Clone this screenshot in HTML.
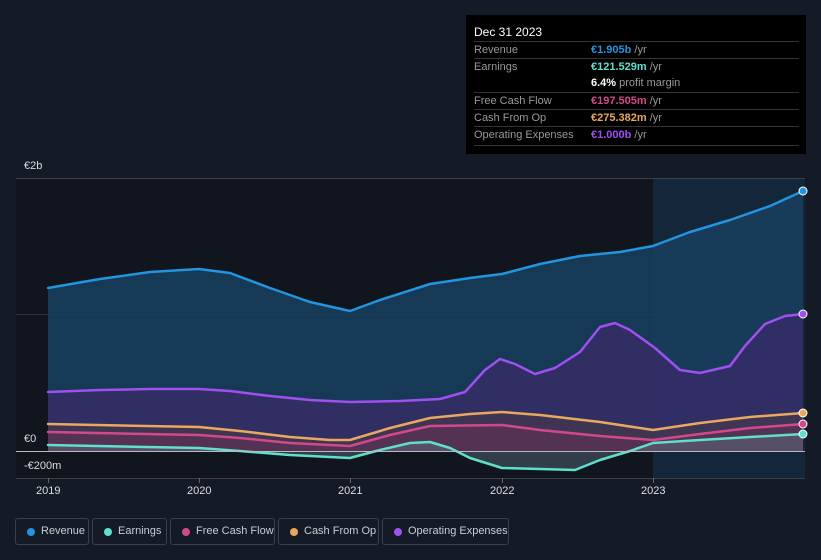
<!DOCTYPE html>
<html><head><meta charset="utf-8"><style>
body{margin:0;width:821px;height:560px;background:#151b26;font-family:"Liberation Sans",sans-serif;overflow:hidden;position:relative}
.tt{position:absolute;left:466px;top:15px;width:340px;height:139px;background:#000;color:#fff;font-size:11px}
.tt .h{position:absolute;left:8px;top:10px;font-size:12px}
.row{position:absolute;left:8px;width:325px;border-top:1px solid #333;height:17px;line-height:17px}
.row .l{position:absolute;left:0;color:#999}
.row .v{position:absolute;left:117px;color:#999}
.leg{position:absolute;top:518px;height:27px;border:1px solid #3a404c;border-radius:3px;color:#c8ccd4;font-size:11px;line-height:25px;box-sizing:border-box;white-space:nowrap}
.leg i{position:absolute;left:11px;top:9px;width:8px;height:8px;border-radius:50%}
.leg span{position:absolute;left:25px}
.ax{position:absolute;color:#ddd;font-size:11px}
</style></head><body>
<svg width="821" height="560" style="position:absolute;left:0;top:0">
<rect x="16" y="178" width="789" height="300" fill="#10151e"/>
<rect x="653" y="178" width="152" height="300" fill="#14263a"/>
<line x1="16" y1="178.5" x2="805" y2="178.5" stroke="#3a404a"/>
<line x1="16" y1="314.5" x2="805" y2="314.5" stroke="#2a3240"/>
<line x1="16" y1="478.5" x2="805" y2="478.5" stroke="#3a404a"/>
<g stroke-linejoin="round" stroke-linecap="round">
<path d="M48,288 L100,279 150,272 199,269 230,273 270,288 310,302 350,311 380,300 430,284 470,278 502,274 540,264 580,256 620,252 653,246 690,232 730,220 770,206 803,191 L803,451 48,451Z" fill="#17405f" opacity=".85"/>
<path d="M48,392 L100,390 150,389 199,389 230,391 270,396 310,400 350,402 400,401 440,399 465,392 485,370 500,359 515,364 535,374 555,368 580,352 600,327 615,323 630,330 655,348 680,370 700,373 730,366 745,346 765,324 785,316 803,314 L803,451 48,451Z" fill="#352d66" opacity=".85"/>
<path d="M48,424 L199,427 240,431 290,437 330,440 350,440 390,428 430,418 470,414 502,412 540,415 600,422 653,430 700,423 750,417 803,413 L803,451 48,451Z" fill="#4a3a4a" opacity=".6"/>
<path d="M48,432 L199,435 240,438 290,443 350,446 390,435 430,426 502,425 540,430 600,436 653,440 700,434 750,428 803,424 L803,451 48,451Z" fill="#6a2f55" opacity=".5"/>
<path d="M48,445 L199,448 240,451 290,455 350,458 380,450 410,443 430,442 450,448 470,458 502,468 540,469 575,470 600,460 630,451 653,443 700,440 750,437 803,434 L803,451 48,451Z" fill="#5a7080" opacity=".45"/>
<g fill="none" stroke-width="2.5">
<polyline stroke="#2394df" points="48,288 100,279 150,272 199,269 230,273 270,288 310,302 350,311 380,300 430,284 470,278 502,274 540,264 580,256 620,252 653,246 690,232 730,220 770,206 803,191"/>
<polyline stroke="#a04ff0" points="48,392 100,390 150,389 199,389 230,391 270,396 310,400 350,402 400,401 440,399 465,392 485,370 500,359 515,364 535,374 555,368 580,352 600,327 615,323 630,330 655,348 680,370 700,373 730,366 745,346 765,324 785,316 803,314"/>
<polyline stroke="#e8a860" points="48,424 199,427 240,431 290,437 330,440 350,440 390,428 430,418 470,414 502,412 540,415 600,422 653,430 700,423 750,417 803,413"/>
<polyline stroke="#d04a8a" points="48,432 199,435 240,438 290,443 350,446 390,435 430,426 502,425 540,430 600,436 653,440 700,434 750,428 803,424"/>
<polyline stroke="#5ee0cc" points="48,445 199,448 240,451 290,455 350,458 380,450 410,443 430,442 450,448 470,458 502,468 540,469 575,470 600,460 630,451 653,443 700,440 750,437 803,434"/>
</g></g>
<line x1="16" y1="451.5" x2="805" y2="451.5" stroke="#bbb" stroke-width="1"/>
<g stroke="#fff" stroke-width="1">
<circle cx="803" cy="191" r="4" fill="#2394df"/><circle cx="803" cy="314" r="4" fill="#a04ff0"/>
<circle cx="803" cy="413" r="4" fill="#e8a860"/><circle cx="803" cy="424" r="4" fill="#d04a8a"/><circle cx="803" cy="434" r="4" fill="#5ee0cc"/>
</g>
<g stroke="#666"><line x1="48.5" y1="478" x2="48.5" y2="483"/><line x1="199.5" y1="478" x2="199.5" y2="483"/><line x1="350.5" y1="478" x2="350.5" y2="483"/><line x1="502.5" y1="478" x2="502.5" y2="483"/><line x1="653.5" y1="478" x2="653.5" y2="483"/></g>
</svg>
<div class="ax" style="left:24px;top:160px">€2b</div>
<div class="ax" style="left:24px;top:433px">€0</div>
<div class="ax" style="left:24px;top:460px">-€200m</div>
<div class="ax" style="left:36px;top:485px">2019</div>
<div class="ax" style="left:187px;top:485px">2020</div>
<div class="ax" style="left:338px;top:485px">2021</div>
<div class="ax" style="left:490px;top:485px">2022</div>
<div class="ax" style="left:641px;top:485px">2023</div>
<div class="tt">
<div class="h">Dec 31 2023</div>
<div class="row" style="top:26px"><span class="l">Revenue</span><span class="v"><b style="color:#2394df">€1.905b</b> /yr</span></div>
<div class="row" style="top:43px"><span class="l">Earnings</span><span class="v"><b style="color:#5ee0cc">€121.529m</b> /yr</span></div>
<div class="row" style="top:60px;border-top:none"><span class="v"><b style="color:#fff">6.4%</b> profit margin</span></div>
<div class="row" style="top:77px"><span class="l">Free Cash Flow</span><span class="v"><b style="color:#d04a8a">€197.505m</b> /yr</span></div>
<div class="row" style="top:94px"><span class="l">Cash From Op</span><span class="v"><b style="color:#e8a860">€275.382m</b> /yr</span></div>
<div class="row" style="top:111px"><span class="l">Operating Expenses</span><span class="v"><b style="color:#a04ff0">€1.000b</b> /yr</span></div>
<div class="row" style="top:130px;height:0"></div>
</div>
<div class="leg" style="left:15px;width:74px"><i style="background:#2394df"></i><span>Revenue</span></div>
<div class="leg" style="left:92px;width:75px"><i style="background:#5ee0cc"></i><span>Earnings</span></div>
<div class="leg" style="left:170px;width:105px"><i style="background:#d04a8a"></i><span>Free Cash Flow</span></div>
<div class="leg" style="left:278px;width:101px"><i style="background:#e8a860"></i><span>Cash From Op</span></div>
<div class="leg" style="left:382px;width:127px"><i style="background:#a04ff0"></i><span>Operating Expenses</span></div>
</body></html>
